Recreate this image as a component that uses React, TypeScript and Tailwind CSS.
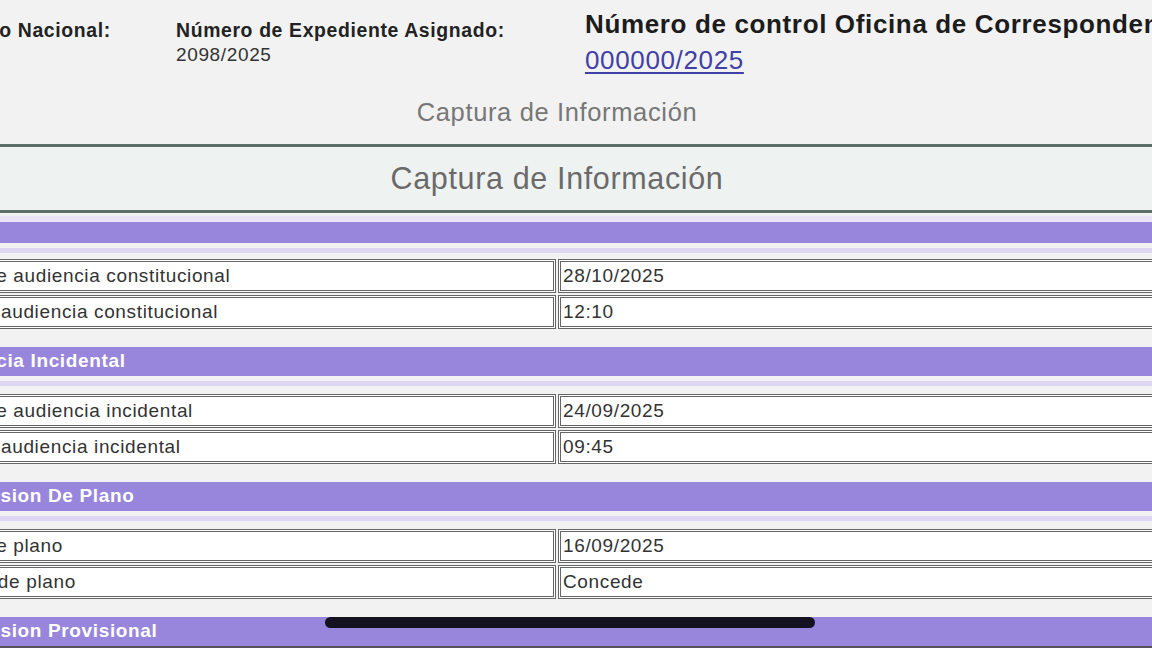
export default function App() {
  const sections = [
    {
      title: "",
      rows: [
        ["Fecha de audiencia constitucional", "28/10/2025"],
        ["Hora de audiencia constitucional", "12:10"],
      ],
    },
    {
      title: "Audiencia Incidental",
      rows: [
        ["Fecha de audiencia incidental", "24/09/2025"],
        ["Hora de audiencia incidental", "09:45"],
      ],
    },
    {
      title: "Suspension De Plano",
      rows: [
        ["Fecha de plano", "16/09/2025"],
        ["Sentido de plano", "Concede"],
      ],
    },
  ]

  return (
    <div className="relative w-[1152px] h-[648px] overflow-hidden bg-[#f2f2f2] font-['Liberation_Sans',Arial,sans-serif] tracking-[0.04em] text-[#333]">
      <div className="ml-[-82px] w-[1278px]">
        {/* encabezado */}
        <div className="flex pt-[10px] h-[74px]">
          <div className="w-[258px] shrink-0 pl-[10px] pt-[9px]">
            <div className="text-[19.4px] leading-[22px] font-bold text-[#222] whitespace-nowrap">Registro Nacional:</div>
          </div>
          <div className="w-[409px] shrink-0 pt-[9px]">
            <div className="text-[19.4px] leading-[22px] font-bold text-[#222] whitespace-nowrap">Número de Expediente Asignado:</div>
            <div className="mt-[3px] text-[19px] leading-[22px] text-[#333]">2098/2025</div>
          </div>
          <div className="shrink-0 whitespace-nowrap">
            <div className="text-[26px] leading-[28px] font-bold text-[#1c1c1c]">Número de control Oficina de Correspondencia Común:</div>
            <a href="#" className="block mt-[8px] text-[26px] leading-[28px] text-[#4040a6] underline underline-offset-[3px]">
              000000/2025
            </a>
          </div>
        </div>

        <div className="mt-[24px] text-center text-[25.5px] leading-[28px] text-[#777]">Captura de Información</div>

        <div className="mt-[18px] h-[69px] border-y-[3px] border-[#5e6e69] bg-[#eef3f1] flex items-center justify-center">
          <span className="text-[30.5px] text-[#6a6a6a]">Captura de Información</span>
        </div>

        <div className="mt-[3px] h-[6px] bg-[#e9e4f8]" />

        {sections.map((s, i) => (
          <div key={i}>
            <div
              className={
                (s.title ? "h-[29px]" : "h-[21px]") +
                " bg-[#9886dc] pl-[10px] flex items-center text-[19px] font-bold text-white whitespace-nowrap"
              }
            >
              {s.title}
            </div>
            <div className="mt-[5px] h-[5px] bg-[#ddd6f3]" />
            <div className={s.title ? "mt-[8px]" : "mt-[6px]"}>
              {s.rows.map(([label, value], j) => (
                <div key={j} className={"flex gap-[2px] " + (j > 0 ? "mt-[2px]" : "")}>
                  <div className="w-[638px] shrink-0 h-[34px] border-[3px] border-double border-[#666] bg-white pl-[2px] flex items-center text-[19px] whitespace-nowrap">
                    {label}
                  </div>
                  <div className="flex-1 h-[34px] border-[3px] border-double border-[#666] bg-white pl-[2px] flex items-center text-[19px]">
                    {value}
                  </div>
                </div>
              ))}
            </div>
            <div className="h-[18px]" />
          </div>
        ))}

        <div className="h-[29px] bg-[#9886dc] pl-[10px] flex items-center text-[19px] font-bold text-white whitespace-nowrap">
          Suspension Provisional
        </div>
        <div className="h-[3px] bg-[#55525e]" />
      </div>

      <div className="absolute left-[325px] top-[617px] w-[490px] h-[11px] rounded-full bg-[#141220]" />
    </div>
  )
}
